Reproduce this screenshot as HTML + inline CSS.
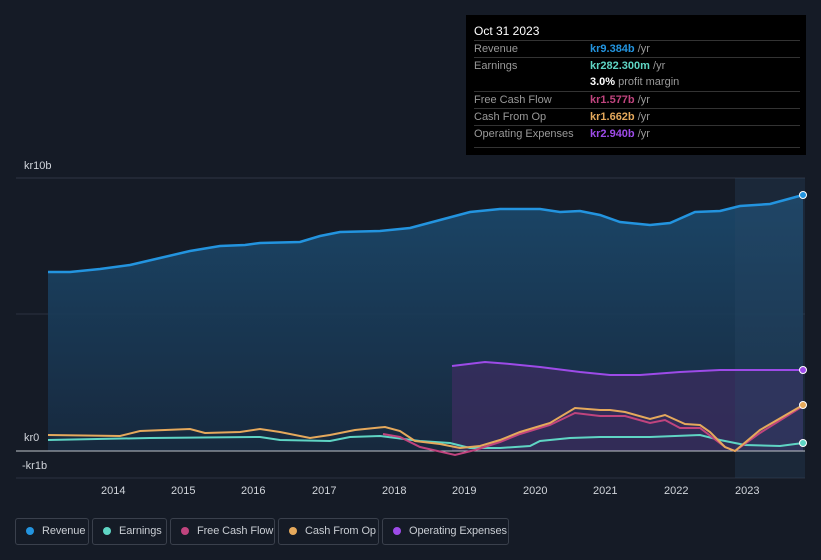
<!DOCTYPE html><html><head><style>
body{margin:0;width:821px;height:560px;background:#151b26;font-family:"Liberation Sans",sans-serif;overflow:hidden;position:relative}
.tt{position:absolute;left:466px;top:15px;width:340px;height:140px;background:#000;color:#fff;font-size:11px}
.tt .h{position:absolute;left:8px;top:9px;font-size:12px}
.row{position:absolute;left:8px;width:326px;border-top:1px solid #333;height:17px;line-height:17px;color:#999}
.row span{position:absolute;left:116px}
.leg{position:absolute;top:518px;height:27px;border:1px solid #3a404c;border-radius:3px;color:#c8ccd2;font-size:11px;line-height:25px;box-sizing:border-box;white-space:nowrap;overflow:hidden;letter-spacing:-0.1px}
.leg i{display:inline-block;width:8px;height:8px;border-radius:50%;margin:0 8px 0 10px;vertical-align:-0.5px}
.ax{position:absolute;color:#d0d4da;font-size:11px}
</style></head><body>
<svg width="821" height="560" style="position:absolute;left:0;top:0">
<defs><linearGradient id="g" x1="0" y1="0" x2="0" y2="1"><stop offset="0" stop-color="#1b4a6e"/><stop offset="1" stop-color="#172a40"/></linearGradient></defs>
<line x1="16" y1="178" x2="805" y2="178" stroke="#2e3644"/>
<line x1="16" y1="314" x2="805" y2="314" stroke="#2a3240"/>
<line x1="16" y1="478" x2="805" y2="478" stroke="#2a3240"/>
<path d="M48,272 L70,272 100,269 130,265 160,258 190,251 220,246 245,245 260,243 300,242 320,236 340,232 380,231 410,228 440,220 470,212 500,209 540,209 560,212 580,211 600,215 620,222 650,225 670,223 695,212 720,211 740,206 770,204 803,195 L803,451 L48,451Z" fill="url(#g)" opacity="0.9"/>
<path d="M452,366 485,362 510,364 540,367 580,372 610,375 640,375 680,372 720,370 760,370 803,370 L803,451 452,451Z" fill="#3a2d5e" opacity="0.8"/>
<rect x="735" y="178" width="70" height="300" fill="#2a4a66" opacity="0.3"/>
<line x1="16" y1="451" x2="805" y2="451" stroke="#c0c4ca"/>
<path d="M48,272 L70,272 100,269 130,265 160,258 190,251 220,246 245,245 260,243 300,242 320,236 340,232 380,231 410,228 440,220 470,212 500,209 540,209 560,212 580,211 600,215 620,222 650,225 670,223 695,212 720,211 740,206 770,204 803,195" fill="none" stroke="#2394df" stroke-width="2.5"/>
<path d="M452,366 485,362 510,364 540,367 580,372 610,375 640,375 680,372 720,370 760,370 803,370" fill="none" stroke="#9d4be8" stroke-width="2"/>
<path d="M48,440 150,438 260,437 280,440 330,441 350,437 380,436 420,441 450,443 470,448 500,448 530,446 540,441 570,438 600,437 650,437 700,435 720,440 745,445 780,446 803,443" fill="none" stroke="#5fd5c4" stroke-width="2"/>
<path d="M383,434 400,437 420,447 455,455 475,450 500,442 520,434 550,425 575,413 600,416 625,416 650,423 665,420 680,428 700,428 725,447 735,451 760,433 803,406" fill="none" stroke="#c0447e" stroke-width="2"/>
<path d="M48,435 120,436 140,431 190,429 205,433 240,432 260,429 280,432 310,438 330,435 355,430 385,427 400,431 415,441 440,444 460,448 480,446 500,440 520,432 550,423 575,408 600,410 610,410 625,412 650,419 665,415 685,424 700,425 710,432 725,447 735,451 760,430 803,405" fill="none" stroke="#e5a95c" stroke-width="2"/>
<circle cx="803" cy="195" r="3.5" fill="#2394df" stroke="#fff"/>
<circle cx="803" cy="370" r="3.5" fill="#9d4be8" stroke="#fff"/>
<circle cx="803" cy="405" r="3.5" fill="#e5a95c" stroke="#fff"/>
<circle cx="803" cy="443" r="3.5" fill="#5fd5c4" stroke="#fff"/>
</svg>
<div class="ax" style="left:24px;top:160px">kr10b</div>
<div class="ax" style="left:24px;top:432px">kr0</div>
<div class="ax" style="left:22px;top:460px">-kr1b</div>
<div class="ax" style="left:101px;top:485px">2014</div><div class="ax" style="left:171px;top:485px">2015</div><div class="ax" style="left:241px;top:485px">2016</div><div class="ax" style="left:312px;top:485px">2017</div><div class="ax" style="left:382px;top:485px">2018</div><div class="ax" style="left:452px;top:485px">2019</div><div class="ax" style="left:523px;top:485px">2020</div><div class="ax" style="left:593px;top:485px">2021</div><div class="ax" style="left:664px;top:485px">2022</div><div class="ax" style="left:735px;top:485px">2023</div>
<div class="tt"><div class="h">Oct 31 2023</div>
<div class="row" style="top:25px">Revenue<span><b style="color:#2394df">kr9.384b</b> /yr</span></div>
<div class="row" style="top:42px">Earnings<span><b style="color:#5fd5c4">kr282.300m</b> /yr</span></div>
<div class="row" style="top:59px;border:0"><span><b style="color:#fff">3.0%</b> profit margin</span></div>
<div class="row" style="top:76px">Free Cash Flow<span><b style="color:#c0447e">kr1.577b</b> /yr</span></div>
<div class="row" style="top:93px">Cash From Op<span><b style="color:#e5a95c">kr1.662b</b> /yr</span></div>
<div class="row" style="top:110px">Operating Expenses<span><b style="color:#9d4be8">kr2.940b</b> /yr</span></div>
<div class="row" style="top:132px;height:0"></div>
</div>
<div class="leg" style="left:15px;width:74px"><i style="background:#2394df"></i>Revenue</div>
<div class="leg" style="left:92px;width:75px"><i style="background:#5fd5c4"></i>Earnings</div>
<div class="leg" style="left:170px;width:105px"><i style="background:#c0447e"></i>Free Cash Flow</div>
<div class="leg" style="left:278px;width:101px"><i style="background:#e5a95c"></i>Cash From Op</div>
<div class="leg" style="left:382px;width:127px"><i style="background:#9d4be8"></i>Operating Expenses</div>
</body></html>
